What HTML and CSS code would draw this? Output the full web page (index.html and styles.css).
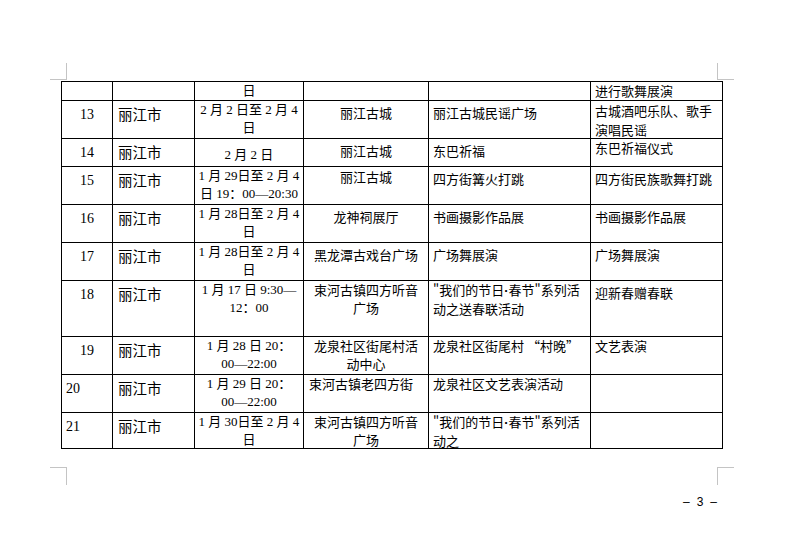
FILE: index.html
```html
<!DOCTYPE html>
<html lang="zh-CN">
<head>
<meta charset="utf-8">
<title>活动表</title>
<link rel="stylesheet" href="styles.css">
</head>
<body>
<div class="page">
  <div class="mark mark-tl"></div>
  <div class="mark mark-tr"></div>
  <div class="mark mark-bl"></div>
  <div class="mark mark-br"></div>

  <div class="sheet">
    <div class="c num"></div>
    <div class="c city"></div>
    <div class="c date p0">日</div>
    <div class="c place"></div>
    <div class="c act"></div>
    <div class="c desc p0">进行歌舞展演</div>

    <div class="c num">13</div>
    <div class="c city">丽江市</div>
    <div class="c date">2 月 2 日至 2 月 4<br>日</div>
    <div class="c place p3">丽江古城</div>
    <div class="c act p3">丽江古城民谣广场</div>
    <div class="c desc p0 tall">古城酒吧乐队、歌手<br>演唱民谣</div>

    <div class="c num">14</div>
    <div class="c city">丽江市</div>
    <div class="c date p7">2 月 2 日</div>
    <div class="c place p3">丽江古城</div>
    <div class="c act p3">东巴祈福</div>
    <div class="c desc p0">东巴祈福仪式</div>

    <div class="c num">15</div>
    <div class="c city">丽江市</div>
    <div class="c date">1 月 29日至 2 月 4<br>日 19：00—20:30</div>
    <div class="c place p1">丽江古城</div>
    <div class="c act p3">四方街篝火打跳</div>
    <div class="c desc p3">四方街民族歌舞打跳</div>

    <div class="c num">16</div>
    <div class="c city">丽江市</div>
    <div class="c date">1 月 28日至 2 月 4<br>日</div>
    <div class="c place p3">龙神祠展厅</div>
    <div class="c act p3">书画摄影作品展</div>
    <div class="c desc p3">书画摄影作品展</div>

    <div class="c num">17</div>
    <div class="c city">丽江市</div>
    <div class="c date">1 月 28日至 2 月 4<br>日</div>
    <div class="c place p3">黑龙潭古戏台广场</div>
    <div class="c act p3">广场舞展演</div>
    <div class="c desc p3">广场舞展演</div>

    <div class="c num">18</div>
    <div class="c city">丽江市</div>
    <div class="c date">1 月 17 日 9:30—<br>12：00</div>
    <div class="c place">束河古镇四方听音<br>广场</div>
    <div class="c act">"我们的节日<span class="dot">·</span>春节"系列活<br>动之送春联活动</div>
    <div class="c desc p3">迎新春赠春联</div>

    <div class="c num">19</div>
    <div class="c city">丽江市</div>
    <div class="c date">1 月 28 日 20：<br>00—22:00</div>
    <div class="c place">龙泉社区街尾村活<br>动中心</div>
    <div class="c act">龙泉社区街尾村 “村晚”</div>
    <div class="c desc">文艺表演</div>

    <div class="c num left">20</div>
    <div class="c city">丽江市</div>
    <div class="c date">1 月 29 日 20：<br>00—22:00</div>
    <div class="c place left">束河古镇老四方街</div>
    <div class="c act">龙泉社区文艺表演活动</div>
    <div class="c desc"></div>

    <div class="c num left">21</div>
    <div class="c city">丽江市</div>
    <div class="c date">1 月 30日至 2 月 4<br>日</div>
    <div class="c place">束河古镇四方听音<br>广场</div>
    <div class="c act">"我们的节日<span class="dot">·</span>春节"系列活<br>动之</div>
    <div class="c desc"></div>
  </div>

  <div class="footer">
    <span class="pn">–</span><span class="pn">3</span><span class="pn">–</span>
  </div>
</div>
</body>
</html>
```

FILE: styles.css
```css
html, body {
  margin: 0;
  padding: 0;
  background: #ffffff;
}

.page {
  position: relative;
  width: 786px;
  height: 553px;
  padding: 81px 0 0 61px;
  box-sizing: border-box;
  color: #000;
  font-family: "Noto Sans CJK SC", "Liberation Sans", sans-serif;
  font-size: 13px;
}

.mark {
  position: absolute;
  width: 17px;
  height: 17px;
  box-sizing: border-box;
  border: 0 solid #c4c4c4;
}
.mark-tl { left: 50px; top: 63px; border-right-width: 1px; border-bottom-width: 1px; }
.mark-tr { left: 717px; top: 63px; border-left-width: 1px; border-bottom-width: 1px; }
.mark-bl { left: 50px; top: 467px; height: 18px; border-right-width: 1px; border-top-width: 1px; }
.mark-br { left: 717px; top: 467px; height: 18px; border-left-width: 1px; border-top-width: 1px; }

.sheet {
  display: grid;
  grid-template-columns: 51px 82px 109px 125px 162px 132px;
  grid-template-rows: 19px 38px 28px 38px 38px 38px 56px 38px 38px 36px;
  width: 662px;
  box-sizing: border-box;
  border-left: 1px solid #000;
  border-top: 1px solid #000;
}

.c {
  box-sizing: border-box;
  border-right: 1px solid #000;
  border-bottom: 1px solid #000;
  line-height: 18px;
  padding-top: 0;
  white-space: nowrap;
  overflow: hidden;
}

.num {
  font-family: "Liberation Serif", serif;
  font-size: 14px;
  text-align: center;
  padding-top: 5px;
}
.num.left {
  text-align: left;
  padding-left: 4px;
}

.city {
  font-size: 14.5px;
  padding-left: 5px;
  padding-top: 4px;
}

.date {
  font-family: "Liberation Serif", "Noto Sans CJK SC", serif;
  font-size: 13px;
  text-align: center;
  line-height: 18px;
}

.place {
  text-align: center;
}
.place.left {
  text-align: left;
  padding-left: 5px;
}

.act {
  padding-left: 4px;
}

.dot {
  font-family: "Liberation Sans", sans-serif;
  font-weight: bold;
}

.desc {
  padding-left: 4px;
}
.desc.tall {
  line-height: 19px;
}

.p0 { padding-top: 0; }
.p1 { padding-top: 1px; }
.p3 { padding-top: 3px; }
.p7 { padding-top: 7px; }

.footer {
  width: 662px;
  margin-top: 45px;
  display: flex;
  justify-content: flex-end;
  gap: 7px;
  padding-right: 6px;
  box-sizing: border-box;
  font-family: "Liberation Sans", sans-serif;
  font-size: 12px;
  line-height: 16px;
}
```
